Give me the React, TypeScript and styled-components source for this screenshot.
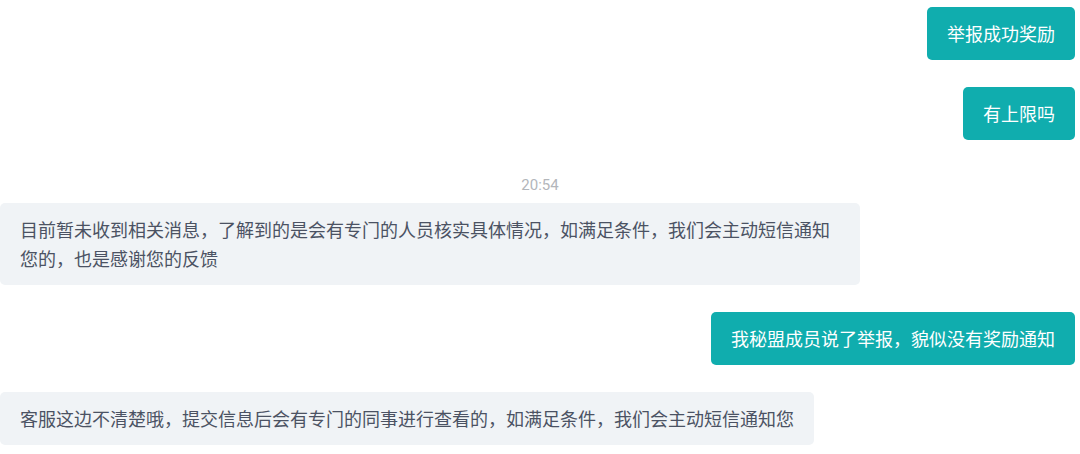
import React from "react";
import styled, { createGlobalStyle } from "styled-components";

const GlobalStyle = createGlobalStyle`
  html, body {
    margin: 0;
    padding: 0;
    background: #ffffff;
  }
  body {
    font-family: "Noto Sans CJK SC", "Noto Sans", Roboto, sans-serif;
  }
`;

const Thread = styled.div`
  display: flex;
  flex-direction: column;
  width: 1080px;
  padding-top: 7px;
`;

const Stamp = styled.div`
  align-self: center;
  margin: 35px 0 8px;
  font-family: Roboto, "Noto Sans", sans-serif;
  font-size: 15px;
  line-height: 20px;
  color: #b3b6bb;
`;

const Bubble = styled.div<{ $mine?: boolean }>`
  align-self: ${(p) => (p.$mine ? "flex-end" : "flex-start")};
  margin-right: ${(p) => (p.$mine ? "5px" : "0")};
  max-width: 860px;
  box-sizing: border-box;
  padding: 12px 20px;
  border-radius: 5px;
  font-size: 18px;
  line-height: 29px;
  background: ${(p) => (p.$mine ? "#10adae" : "#f0f3f6")};
  color: ${(p) => (p.$mine ? "#ffffff" : "#4b5263")};

  & + & {
    margin-top: 27px;
  }
`;

type Msg = { kind: "me" | "them" | "time"; text: string };

const messages: Msg[] = [
  { kind: "me", text: "举报成功奖励" },
  { kind: "me", text: "有上限吗" },
  { kind: "time", text: "20:54" },
  {
    kind: "them",
    text: "目前暂未收到相关消息，了解到的是会有专门的人员核实具体情况，如满足条件，我们会主动短信通知您的，也是感谢您的反馈",
  },
  { kind: "me", text: "我秘盟成员说了举报，貌似没有奖励通知" },
  {
    kind: "them",
    text: "客服这边不清楚哦，提交信息后会有专门的同事进行查看的，如满足条件，我们会主动短信通知您",
  },
];

export default function App() {
  return (
    <>
      <GlobalStyle />
      <Thread>
        {messages.map((m, i) =>
          m.kind === "time" ? (
            <Stamp key={i}>{m.text}</Stamp>
          ) : (
            <Bubble key={i} $mine={m.kind === "me"}>
              {m.text}
            </Bubble>
          )
        )}
      </Thread>
    </>
  );
}
